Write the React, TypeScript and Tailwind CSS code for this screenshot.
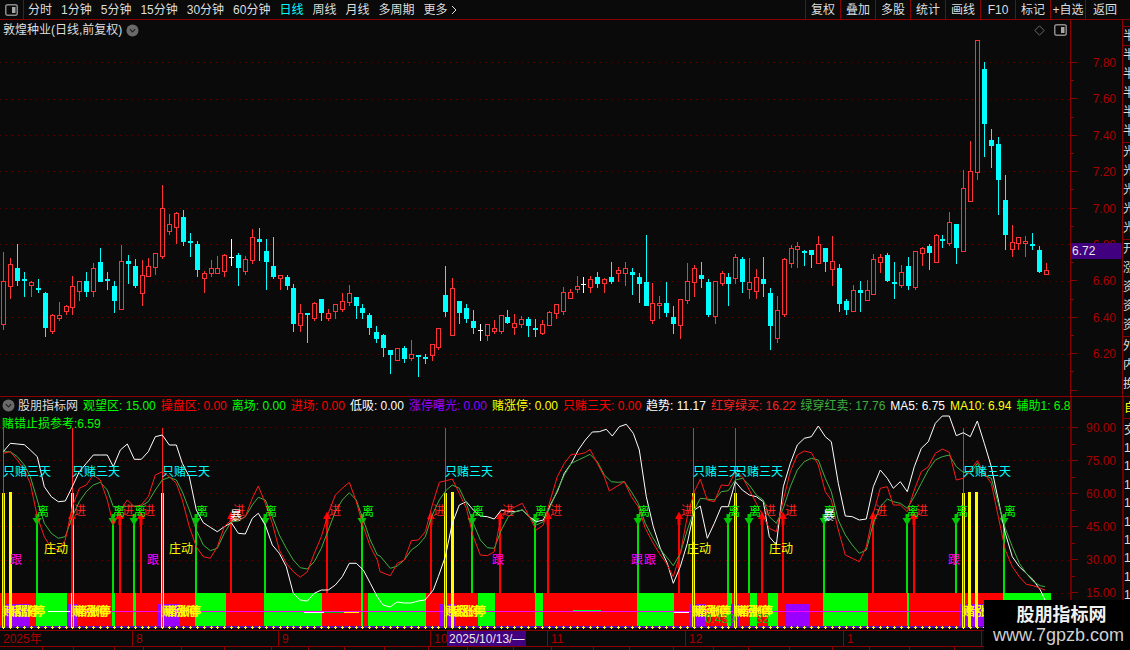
import React from 'react';

type Candle = [string, number, number, number, number];

const RED = '#ff3333';
const CYAN = '#00ffff';

// candle values are read off at 3x, per crop: type, high, body top, body bottom, low
const c0: Candle[] = [
  ['r',215,303,431,450],['r',235,253,319,357],['c',192,264,303,318],['c',276,297,303,351],['r',303,306,314,351],
  ['c',297,323,330,339],['c',336,339,444,471],['r',402,405,453,462],['r',366,405,413,423],['r',375,378,392,405],
  ['r',288,318,381,405],['r',303,303,333,363],['c',276,303,336,351],['r',249,264,333,351],['c',204,246,306,306],
  ['c',276,297,303,330],['c',303,318,363,399],['r',195,243,387,387],['c',225,243,252,312],['c',237,258,318,324],
  ['r',240,285,339,378],['r',234,258,288,288],['r',219,219,261,285],['r',15,84,228,237],['r',102,132,152,165],
  ['r',96,99,141,192],['c',90,111,186,198],['c',159,183,186,231],['c',183,192,270,291],['r',273,279,294,339],
  ['r',240,264,279,291],['r',228,264,279,279],['r',222,225,273,291],['w',177,231,234,258],['c',219,225,264,318],
  ['r',228,237,273,285],['r',147,171,240,252],['c',144,177,186,243],['c',177,213,246,330],['c',171,258,291,297],
  ['r',285,285,293,330],['c',285,291,318,330],['c',312,324,432,456],['r',372,399,435,456],['c',399,399,405,489],
  ['r',366,369,414,423],['c',357,357,399,423],['r',387,399,414,423],['r',372,372,393,417],['r',339,363,387,396],
  ['r',315,339,366,378],['c',351,351,378,417],['c',372,384,399,417],['c',399,405,444,465],['c',438,456,477,489],
];
const c1: Candle[] = [
  ['c',342,345,384,411],['c',390,390,405,462],['r',384,384,420,423],['c',378,384,417,429],['r',360,402,414,423],
  ['c',405,405,411,471],['c',402,411,417,432],['r',372,372,405,423],['r',324,324,381,390],['c',138,225,276,291],
  ['r',174,204,345,345],['c',243,243,279,312],['c',252,264,297,309],['c',270,303,324,342],['w',312,330,333,363],
  ['r',312,312,345,363],['r',300,324,333,342],['r',285,285,333,342],['c',270,291,309,312],['r',282,309,321,345],
  ['r',288,297,312,324],['c',291,297,318,351],['c',297,324,330,351],['r',300,312,339,345],['r',273,276,315,318],
  ['r',252,252,279,297],['r',201,216,273,285],['r',207,216,234,237],['r',168,198,207,219],['w',171,192,195,219],
  ['r',168,177,201,219],['c',156,171,192,204],['r',174,177,189,219],['c',126,171,186,192],['r',141,150,159,186],
  ['r',126,144,159,198],['c',144,156,165,225],['c',159,171,192,249],['c',45,186,258,258],['r',189,249,300,312],
  ['r',228,249,255,297],['c',186,249,279,291],['c',258,291,312,342],['r',237,237,315,357],['r',129,183,240,252],
  ['r',135,144,186,231],['c',126,165,177,204],['c',177,186,285,291],['r',183,183,288,312],['r',153,159,189,198],
  ['c',159,171,192,258],['r',102,111,174,192],['c',111,117,186,219],['r',114,186,207,237],['r',147,171,213,237],
];
const c2: Candle[] = [
  ['c',681,747,762,801],['c',774,789,888,960],['r',798,840,924,939],['r',684,687,852,861],['r',645,654,699,714],
  ['r',636,648,657,714],['c',660,663,669,708],['c',660,660,675,714],['r',618,642,699,699],['c',654,654,696,726],
  ['r',618,693,717,768],['c',702,714,822,846],['c',807,813,840,855],['r',765,780,843,843],['c',753,780,789,846],
  ['r',750,780,810,813],['r',672,687,792,795],['r',672,681,696,729],['c',669,675,753,756],['c',696,756,762,807],
  ['r',705,726,765,774],['c',681,708,768,780],['r',663,663,771,780],['r',651,654,670,708],['c',642,648,669,720],
  ['r',612,615,696,696],['c',615,627,633,654],['r',546,576,639,648],['c',582,582,654,702],['r',420,474,663,663],
  ['r',333,423,513,513],['r',30,30,426,450],['c',96,117,282,381],['c',297,330,348,414],['c',321,342,450,555],
  ['c',435,510,615,660],['r',585,636,657,681],['r',621,621,639,660],['r',618,633,639,681],['c',609,642,648,660],
  ['c',648,660,726,729],['r',699,720,732,735],
];

const toPx = (list: Candle[], base: number): Candle[] =>
  list.map(([t, a, b, c, d]) => [t, Math.round(base + a / 3), Math.round(base + b / 3), Math.round(base + c / 3), Math.round(base + d / 3)]);
const candles = [...toPx(c0, 180), ...toPx(c1, 220), ...toPx(c2, 30)];
const xOf = (i: number) => Math.round(3.4 + 6.905 * i);

// indicator lines, also read at 3x: [u, v] pairs per crop
const whiteLine = [
  [[10,95,31,70,52,72,73,74,91,90,112,110,133,200,154,230,175,245,196,243,217,200,238,155,259,130,280,105,301,105,322,105,340,140,361,90,382,72,403,118,424,118,445,95,466,50,487,45,508,75,529,75,547,130,568,170,589,270,610,308,631,322,652,335,673,320,694,308,715,340,736,342,757,295,775,280,796,315,817,375,838,400,859,440,880,520,901,540,922,543,943,520,964,510,985,510,1006,495,1027,470,1048,430,1069,430,1090,450,1111,490,1132,530], 0],
  [[9,555,30,561,51,546,72,549,93,549,114,543,135,540,160,510,175,470,196,410,217,310,238,255,259,245,280,270,301,288,322,290,343,297,364,270,385,275,406,275,427,270,448,290,469,305,490,300,511,255,532,215,553,160,574,130,595,90,616,60,637,36,658,35,679,28,697,48,718,20,739,13,760,40,778,90,799,230,820,320,841,385,862,430,880,490,901,440,922,370,943,270,961,258,982,355,1003,310,1024,260,1045,260,1066,185,1087,210,1108,225,1129,230], 380],
  [[40,245,58,350,79,375,100,200,121,130,142,75,163,55,184,50,205,18,226,50,244,65,265,190,286,288,307,290,328,300,349,297,370,200,391,150,412,175,430,205,451,185,472,215,493,140,514,85,535,65,556,10,577,-12,598,-12,619,47,640,38,661,50,682,3,703,70,724,140,745,240,766,340,787,410,808,440,829,460,850,480,871,510,885,540], 750],
] as [number[], number][];
const redLine = [
  [[10,100,31,95,52,120,73,150,91,190,112,290,133,350,154,385,175,390,196,360,217,260,238,205,259,195,280,165,301,180,322,240,340,315,361,270,382,240,403,260,424,255,445,230,466,165,487,155,508,170,529,190,547,240,568,320,589,380,610,410,631,415,652,380,673,320,694,300,715,300,736,290,757,235,775,198,796,250,817,310,838,390,859,430,880,455,901,472,922,455,943,400,964,350,985,280,1006,225,1027,205,1048,187,1069,245,1090,320,1111,380,1132,420], 0],
  [[0,455,31,467,52,430,73,420,94,362,115,360,136,335,157,255,178,187,199,182,217,177,238,220,259,265,280,350,301,405,322,407,343,395,364,285,385,270,406,260,427,250,448,290,469,330,490,315,511,240,532,170,553,130,574,103,595,103,616,98,630,88,652,130,673,170,688,213,709,200,733,185,754,230,775,260,796,325,817,365,838,400,859,430,880,470,901,400,922,290,943,215,961,178,982,240,1003,245,1024,195,1045,197,1066,155,1087,170,1108,210,1129,250], 380],
  [[40,290,58,325,79,335,100,240,121,155,142,105,163,93,184,98,205,135,226,215,244,240,265,330,286,405,307,415,328,425,349,380,370,280,391,205,412,200,430,255,451,255,472,275,493,210,514,155,535,140,556,100,577,87,598,97,619,180,640,175,661,150,682,122,703,160,724,190,745,290,766,390,787,440,808,470,829,493,850,497,871,505,885,510], 750],
] as [number[], number][];
const greenLine = [
  [[10,95,31,95,52,110,73,135,91,170,112,240,133,310,154,340,175,355,196,350,217,290,238,245,259,215,280,195,301,187,322,210,340,260,361,265,382,258,403,258,424,258,445,245,466,210,487,180,508,172,529,180,547,215,568,270,589,330,610,375,631,392,652,385,673,340,694,305,715,303,736,290,757,255,775,232,796,240,817,290,838,345,859,385,880,420,901,443,922,447,943,425,964,385,985,330,1006,275,1027,240,1048,218,1069,240,1090,300,1111,360,1132,405], 0],
  [[0,408,31,445,52,438,73,420,94,390,115,375,136,350,157,285,178,240,199,210,217,195,238,205,259,250,280,310,301,360,322,383,343,385,364,330,385,290,406,275,427,270,448,290,469,315,490,305,511,260,532,210,553,165,574,130,595,120,616,110,630,103,652,125,673,165,694,185,715,187,733,185,754,215,775,250,796,310,817,350,838,385,859,410,880,437,901,400,922,330,943,270,961,235,982,237,1003,240,1024,215,1045,212,1066,180,1087,175,1108,195,1129,225], 380],
  [[40,240,58,290,79,310,100,265,121,200,142,150,163,125,184,115,205,120,226,175,244,215,265,300,286,345,307,375,328,400,349,390,370,310,391,260,412,237,430,245,451,250,472,265,493,230,514,190,535,150,556,120,577,110,598,105,619,140,640,157,661,160,682,130,703,165,724,175,745,250,766,325,787,380,808,430,829,460,850,485,871,497,885,500], 750],
] as [number[], number][];

const toPoints = (parts: [number[], number][]) =>
  parts
    .map(([vals, off]) => {
      const out: string[] = [];
      for (let i = 0; i < vals.length; i += 2) out.push(`${(off + vals[i] / 3).toFixed(1)},${(420 + vals[i + 1] / 3).toFixed(1)}`);
      return out.join(' ');
    })
    .join(' ');

const bandSegs: [number, number, string][] = [
  [0,36,'r'],[36,67,'g'],[67,112,'r'],[112,115,'g'],[115,133,'r'],[133,136,'g'],[136,195,'r'],[195,226,'g'],[226,264,'r'],
  [264,322,'g'],[322,361,'r'],[361,363,'g'],[363,368,'r'],[368,426,'g'],[426,478,'r'],[478,495,'g'],[495,535,'r'],[535,543,'g'],
  [543,637,'r'],[637,674,'g'],[674,727,'r'],[727,732,'g'],[732,750,'r'],[750,757,'g'],[757,768,'r'],[768,778,'g'],[778,823,'r'],
  [823,868,'g'],[868,907,'r'],[907,909,'g'],[909,1003,'r'],[1003,1051,'g'],
];
const purple: [number, number][] = [[4,29],[67,77],[157,180],[440,456],[689,705],[731,740],[785,809],[960,984]];

const greenArrows = [37,113,134,196,265,362,472,535,638,728,749,824,907,956,1004];
const redArrows = [72,120,141,231,327,431,500,548,679,762,783,873,914];
const thinRed = [3,72,162,445,693,735,963];
const thickYellow = [10,452,969,976];
const sanTian = [3,72,162,445,693,735,963];
const zhuangDong = [44,169,687,769];
const gen = [16,153,498,637,650,954];
const duZhang = [3,9,72,75,162,165,445,450,692,695,734,737,963];

const navItems = ['分时','1分钟','5分钟','15分钟','30分钟','60分钟','日线','周线','月线','多周期','更多'];
const toolItems = ['复权','叠加','多股','统计','画线','F10','标记','+自选'];

const legend: [string, string, string][] = [
  ['观望区','15.00','text-[#00ff00]'],['操盘区','0.00','text-[#ff0000]'],['离场','0.00','text-[#00ff00]'],['进场','0.00','text-[#ff0000]'],
  ['低吸','0.00','text-[#ffffff]'],['涨停曙光','0.00','text-[#9900ff]'],['赌涨停','0.00','text-[#ffff00]'],['只赌三天','0.00','text-[#ff0000]'],
  ['趋势','11.17','text-[#ffffff]'],['红穿绿买','16.22','text-[#ff2020]'],['绿穿红卖','17.76','text-[#3fae3f]'],['MA5','6.75','text-[#ffffff]'],
  ['MA10','6.94','text-[#ffff00]'],['辅助1','6.8','text-[#00ff00]'],
];

const dateCells: { w: string; label: string; active?: boolean }[] = [
  { w: 'w-[133px]', label: '2025年' },
  { w: 'w-[146px]', label: '8' },
  { w: 'w-[152px]', label: '9' },
  { w: 'w-[17px]', label: '10' },
  { w: 'w-[78px]', label: '2025/10/13/—', active: true },
  { w: 'w-[22px]', label: '' },
  { w: 'w-[138px]', label: '11' },
  { w: 'w-[158px]', label: '12' },
  { w: 'w-[138px]', label: '1' },
];

const PanelIcon = () => (
  <svg width="13" height="12" viewBox="0 0 13 12">
    <rect x="0.75" y="0.75" width="11.5" height="10.5" rx="2" fill="none" stroke="#8a8a8a" strokeWidth="1.5" />
    <rect x="7" y="3" width="3.5" height="6" fill="#a8a8a8" />
  </svg>
);

const ChevronCircle = () => (
  <svg width="13" height="13" viewBox="0 0 13 13" className="shrink-0">
    <circle cx="6.5" cy="6.5" r="6" fill="#6a6a6a" />
    <path d="M3.8 5.2 6.5 8l2.7-2.8" fill="none" stroke="#222" strokeWidth="1.2" />
  </svg>
);

const MainChart = () => (
  <svg width="1070" height="356" viewBox="0 40 1070 356" className="block" shapeRendering="crispEdges">
    {[62,99,135,171,208,244,281,317,354].map((y) => (
      <line key={y} x1="0" x2="1070" y1={y + 0.5} y2={y + 0.5} stroke="#5c0000" strokeDasharray="1 5" />
    ))}
    {candles.map(([t, hi, top, bot, lo], i) => {
      const x = xOf(i);
      const color = t === 'r' ? RED : t === 'c' ? CYAN : '#ffffff';
      const h = Math.max(bot - top, 2);
      if (t === 'r') {
        return (
          <g key={i} stroke={color} fill="none">
            {hi < top && <line x1={x + 0.5} x2={x + 0.5} y1={hi} y2={top} />}
            {lo > top + h && <line x1={x + 0.5} x2={x + 0.5} y1={top + h} y2={lo} />}
            <rect x={x - 1.5} y={top + 0.5} width="4" height={h} />
          </g>
        );
      }
      return (
        <g key={i}>
          <rect x={x} y={hi} width="1" height={lo - hi} fill={color} />
          {t === 'w' ? (
            <rect x={x - 2} y={top} width="5" height="1" fill={color} />
          ) : (
            <rect x={x - 2} y={top} width="5" height={h} fill={color} />
          )}
        </g>
      );
    })}
  </svg>
);

const IndicatorChart = () => (
  <svg width="1070" height="217" viewBox="0 413 1070 217" className="block">
    <g shapeRendering="crispEdges">
      {[427,460,493,526,560,593].map((y) => (
        <line key={y} x1="0" x2="1070" y1={y + 0.5} y2={y + 0.5} stroke="#5c0000" strokeDasharray="1 5" />
      ))}
      {bandSegs.map(([a, b, c]) => (
        <rect key={a} x={a} y="593" width={b - a} height="34" fill={c === 'r' ? '#ff0000' : '#00ff00'} />
      ))}
      {purple.map(([a, b]) => (
        <rect key={a} x={a} y="604" width={b - a} height="23" fill="#9900ff" />
      ))}
      <rect x="0" y="626" width="1051" height="2" fill="#5a10b0" />
      <rect x="48" y="611" width="22" height="1" fill="#ffffff" />
      <rect x="70" y="611" width="914" height="1" fill="#ff00ff" />
      <rect x="304" y="612" width="20" height="1" fill="#ffffff" />
      <rect x="324" y="612" width="20" height="1" fill="#00c000" />
      <rect x="344" y="612" width="15" height="1" fill="#ffff00" />
      <rect x="573" y="610" width="28" height="1" fill="#00ff00" />
      <rect x="674" y="612" width="15" height="1" fill="#ffffff" />
      {candles.map((_, i) => (
        <path key={i} d={`M${xOf(i) - 1} 627h3M${xOf(i)} 626v3`} stroke="#ffff00" />
      ))}
      {thickYellow.map((x) => (
        <rect key={x} x={x - 1} y="492" width="3" height="135" fill="#ffff00" />
      ))}
      {thinRed.map((x) => (
        <g key={x}>
          <rect x={x - 1} y="493" width="1" height="134" fill="#ffff00" />
          <rect x={x + 1} y="493" width="1" height="134" fill="#ffff00" />
          <rect x={x} y="428" width="1" height="199" fill="#ff2020" />
        </g>
      ))}
      {greenArrows.map((x) => (
        <rect key={x} x={x - 1} y="522" width="2" height="71" fill="#00e000" />
      ))}
      {redArrows.map((x) => (
        <rect key={x} x={x - 1} y="518" width="2" height="75" fill="#ff0000" />
      ))}
    </g>
    {greenArrows.map((x) => (
      <path key={x} d={`M${x - 1.5} 514h3v4h3l-4.5 7.5-4.5-7.5h3z`} fill="#00c800" />
    ))}
    {redArrows.map((x) => (
      <path key={x} d={`M${x} 511.5l4 7.5h-2.5v6h-3v-6h-2.5z`} fill="#ff0000" />
    ))}
    <polyline points={toPoints(whiteLine)} fill="none" stroke="#ffffff" strokeWidth="1" />
    <polyline points={toPoints(greenLine)} fill="none" stroke="#3fae3f" strokeWidth="1" />
    <polyline points={toPoints(redLine)} fill="none" stroke="#ff1a1a" strokeWidth="1" />
    <g fontSize="12">
      <text x="2" y="428" fill="#00ff00">赌错止损参考:6.59</text>
      {sanTian.map((x) => (
        <text key={x} x={x} y="476" fill="#00ffff">只赌三天</text>
      ))}
      {greenArrows.map((x) => (
        <text key={x} x={x} y="516" fill="#00ff00">离</text>
      ))}
      {redArrows.map((x) => (
        <text key={x} x={x + 2} y="515" fill="#ff2020">进</text>
      ))}
      {[230,823].map((x) => (
        <text key={x} x={x} y="520" fill="#ffffff">暴</text>
      ))}
      {zhuangDong.map((x) => (
        <text key={x} x={x} y="553" fill="#ffff00">庄动</text>
      ))}
      {gen.map((x) => (
        <text key={x} x={x - 6} y="564" fill="#ff00ff">跟</text>
      ))}
      {duZhang.map((x) => (
        <text key={x} x={x} y="616" fill="#ffff00" fontWeight="700">赌涨停</text>
      ))}
      <text x="705" y="623" fill="#00c000">0.439</text>
      <text x="756" y="623" fill="#00c000">32</text>
    </g>
  </svg>
);

const AxisTicks = ({ height, first, step }: { height: number; first: number; step: number }) => {
  const ticks: React.ReactNode[] = [];
  for (let k = 0, y = first; y < height; k++, y += step / 2) {
    ticks.push(<rect key={k} x="0" y={Math.round(y)} width={k % 2 === 0 ? 6 : 3} height="1" fill="#8b0000" />);
  }
  return (
    <svg width="6" height={height} className="absolute left-0 top-0" shapeRendering="crispEdges">
      {ticks}
    </svg>
  );
};

// the window cuts these cells off, only their left edge shows
const stripGroups = [
  ['半','半','半','半','半'],
  ['光','光','光','光','光'],
  ['开','涨','资','资','资'],
  ['外','内','换'],
];
const dividerWidths = [43,31,41,29,38,43,47,37,36,40,44,39,46,38,42,36,44,40,35,41,43,37,40,45,38,42];

const App = () => {
  return (
    <div className="relative flex h-[650px] w-[1130px] flex-col overflow-hidden bg-[#0a0a0a] text-[12px] leading-none text-[#dedede] [font-family:'Liberation_Sans','Noto_Sans_CJK_SC',sans-serif]">
      {/* toolbar */}
      <div className="flex h-[20px] shrink-0 items-center border-b border-[#8b0000]">
        <div className="flex h-full w-[24px] shrink-0 items-center justify-center border-r border-[#8b0000]">
          <PanelIcon />
        </div>
        <div className="flex flex-1 items-center gap-[9px] pl-[4px]">
          {navItems.map((item) => (
            <span key={item} className={item === '日线' ? 'text-[#00ffff]' : ''}>
              {item}
            </span>
          ))}
          <svg width="6" height="10" viewBox="0 0 6 10" className="-ml-[6px]">
            <path d="M1 1l4 4-4 4" fill="none" stroke="#dedede" />
          </svg>
        </div>
        <div className="flex h-full w-[325px] shrink-0">
          {toolItems.map((item) => (
            <div key={item} className="flex h-full w-[35px] items-center justify-center border-l border-[#8b0000]">
              {item}
            </div>
          ))}
          <div className="flex h-full flex-1 items-center border-l border-[#8b0000] pl-[7px]">返回</div>
        </div>
      </div>

      {/* price panel */}
      <div className="flex h-[377px] shrink-0 border-b border-[#8b0000]">
        <div className="flex w-[1070px] shrink-0 flex-col">
          <div className="flex h-[20px] items-center gap-[4px] pl-[3px]">
            <span>敦煌种业(日线,前复权)</span>
            <ChevronCircle />
            <div className="ml-auto flex items-center gap-[9px] pr-[3px]">
              <svg width="11" height="11" viewBox="0 0 11 11">
                <path d="M5.5.8 10.2 5.5 5.5 10.2.8 5.5z" fill="none" stroke="#6a6a6a" />
              </svg>
              <PanelIcon />
            </div>
          </div>
          <MainChart />
        </div>
        <div className="relative w-[52px] shrink-0 border-l border-[#8b0000] pt-[25px] pr-[6px] text-right text-[#a80000]">
          <AxisTicks height={376} first={42} step={36.4} />
          {['7.80','7.60','7.40','7.20','7.00','6.80','6.60','6.40','6.20'].map((v) => (
            <div key={v} className="h-[36.4px] leading-[36.4px]">
              {v}
            </div>
          ))}
          <div className="absolute left-0 top-[223px] flex h-[16px] w-[50px] items-center bg-[#40007f] pl-[1px] text-[#e8e8e8]">6.72</div>
        </div>
        <div className="flex w-[8px] shrink-0 flex-col overflow-hidden border-l border-[#8b0000] pt-[6px]">
          <div className="h-[19px] shrink-0 border-t border-[#8b0000] pt-[3px]">半</div>
          {stripGroups.map((group, g) => (
            <div key={g} className="h-[97px] w-[12px] shrink-0 border-t border-[#8b0000]">
              {group.map((t, i) => (
                <div key={i} className="h-[19px] w-[12px] pt-[3px] text-[#dcdcdc]">
                  {t}
                </div>
              ))}
            </div>
          ))}
        </div>
      </div>

      {/* indicator panel */}
      <div className="flex h-[233px] shrink-0">
        <div className="flex w-[1070px] shrink-0 flex-col">
          <div className="flex h-[16px] shrink-0 items-center gap-[5px] overflow-hidden whitespace-nowrap pl-[2px] pt-[1px]">
            <div className="flex shrink-0 items-center gap-[3px]">
              <ChevronCircle />
              <span>股朋指标网</span>
            </div>
            {legend.map(([name, val, color]) => (
              <span key={name} className={`shrink-0 ${color}`}>
                {name}: {val}
              </span>
            ))}
          </div>
          <IndicatorChart />
        </div>
        <div className="relative w-[52px] shrink-0 border-l-2 border-[#6e0000] pt-[15px] pr-[6px] text-right text-[#a80000]">
          <AxisTicks height={233} first={30} step={33} />
          {['90.00','75.00','60.00','45.00','30.00','15.00'].map((v) => (
            <div key={v} className="h-[33px] leading-[33px]">
              {v}
            </div>
          ))}
        </div>
        <div className="flex w-[8px] shrink-0 flex-col overflow-hidden border-l-2 border-[#6e0000]">
          <div className="h-[21px] w-[12px] pt-[5px] text-[#ffff00]">自</div>
          <div className="h-[24px] w-[12px] border-t border-[#8b0000] pt-[5px] text-[#dedede]">交</div>
          {[0,1,2,3,4,5,6,7,8].map((k) => (
            <div key={k} className="h-[18.4px] shrink-0 text-[#dedede]">1</div>
          ))}
        </div>
      </div>

      {/* date bar */}
      <div className="relative flex h-[17px] shrink-0 items-center border-y border-[#8b0000] text-[#a80000]">
        {dateCells.map((cell, i) => (
          <div
            key={i}
            className={
              cell.active
                ? 'flex h-full shrink-0 items-center whitespace-nowrap bg-[#40007f] pl-[1px] text-[#e8e8e8] ' + cell.w
                : 'flex h-full shrink-0 items-center border-r border-[#8b0000] pl-[3px] ' + cell.w
            }
          >
            {cell.label}
          </div>
        ))}
      </div>

      {/* cell row cut off by the window */}
      <div className="flex h-[3px] shrink-0 overflow-hidden">
        {dividerWidths.map((w, i) => (
          <div key={i} className="h-full shrink-0 border-r border-[#8b0000]" style={{ width: w }} />
        ))}
      </div>

      {/* watermark */}
      <div className="absolute left-[984px] top-[600px] flex h-[50px] w-[146px] flex-col items-center bg-black pt-[6px] pl-[3px] text-center">
        <div className="ml-[6px] text-[18px] font-bold leading-[19px] text-[#f0f0f0]">股朋指标网</div>
        <div className="text-[18px] leading-[20px] text-[#d0d0d0]">www.7gpzb.com</div>
      </div>
    </div>
  );
};

export default App;
